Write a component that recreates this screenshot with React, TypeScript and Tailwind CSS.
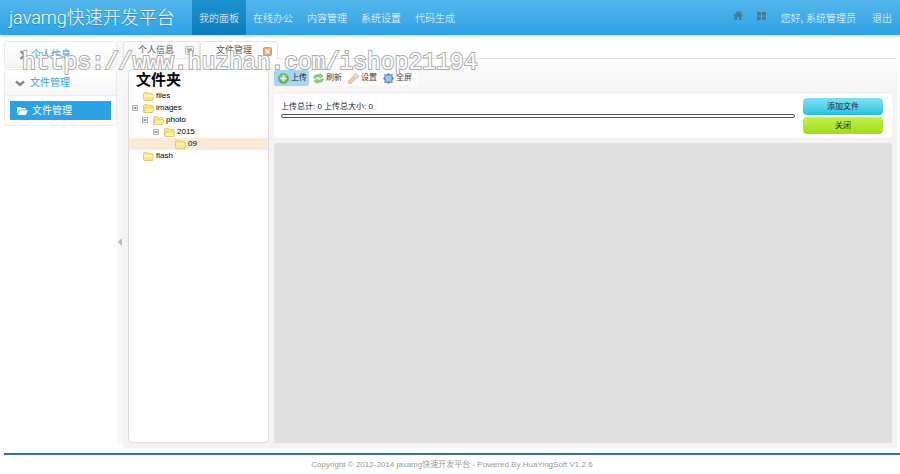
import React from 'react';

const navItems = ['我的面板', '在线办公', '内容管理', '系统设置', '代码生成'];

const treeItems = [
    { name: 'files', indent: 'pl-[14px]', open: false },
    { name: 'images', indent: 'pl-[3px]', open: true },
    { name: 'photo', indent: 'pl-[13px]', open: true },
    { name: '2015', indent: 'pl-[24px]', open: true },
    { name: '09', indent: 'pl-[46px]', open: false, selected: true },
    { name: 'flash', indent: 'pl-[14px]', open: false },
];

const FolderIcon = ({ open }: { open: boolean }) => (
    <svg className="w-[11px] h-[9px] shrink-0" viewBox="0 0 11 9">
        <path d="M.5 2Q.5.5 2 .5h2.5l1 1H9Q10 1.5 10 2.5V8q0 .5-.5.5h-8Q.5 8.500.5 7.500z" fill="#fbe388" stroke="#d9bd55" strokeWidth=".7" />
        {open
            ? <path d="M1 8.500 2.200 3.800h8.500L9.500 8.500z" fill="#fff0a0" stroke="#d9bd55" strokeWidth=".6" />
            : <path d="M1 3.200h8.500V5H1z" fill="#fff3b5" />}
    </svg>
);

const MinusBox = () => (
    <svg className="w-[6px] h-[6px] shrink-0" viewBox="0 0 6 6">
        <path d="M.5.5h5v5h-5z" fill="#fff" stroke="#999" strokeWidth=".8" />
        <path d="M1.500 3h3" stroke="#333" strokeWidth="1" />
    </svg>
);

const ChevronIcon = ({ down }: { down?: boolean }) => (
    <svg className="w-[10px] h-[10px]" viewBox="0 0 10 10" fill="none" stroke="#858585" strokeWidth="2.400">
        {down ? <path d="M1 3.500l4 3.500 4-3.500" /> : <path d="M3.500 1L7.500 5l-4 4" />}
    </svg>
);

const OpenFolderIcon = () => (
    <svg className="w-[11px] h-[8px]" viewBox="0 0 11 8" fill="#fff">
        <path d="M0 6.500V1q0-1 1-1h2.500l1 1H8q.8 0 .8.8v.7H2.800z" />
        <path d="M.6 8 3 3.200h8L8.800 8z" />
    </svg>
);

const CloseIcon = ({ active }: { active?: boolean }) => (
    <svg className="w-[9px] h-[9px]" viewBox="0 0 9 9">
        <rect x=".5" y=".5" width="8" height="8" rx="1" fill={active ? '#eda876' : '#f1f1f1'} stroke={active ? '#dc9560' : '#bbb'} />
        <path d="M2.500 2.500l4 4m0-4l-4 4" stroke={active ? '#fff' : '#888'} strokeWidth="1.400" />
    </svg>
);

const HomeIcon = () => (
    <svg className="w-[10px] h-[9px]" viewBox="0 0 10 9" fill="#4c7590">
        <path d="M5 0l5 4.500-.8.8L5 1.600.8 5.300 0 4.500z" />
        <path d="M5 1.600l3.500 3.200V9H6V6H4v3H1.500V4.800zM7.200.5h1.300V3L7.200 2z" />
    </svg>
);

const GridIcon = () => (
    <svg className="w-[9px] h-[8px]" viewBox="0 0 9 8" fill="#4c7590">
        <path d="M0 0h4v3.500H0zM5 0h4v3.500H5zM0 4.500h4V8H0zM5 4.500h4V8H5z" />
    </svg>
);

const AddIcon = () => (
    <svg className="w-[11px] h-[11px]" viewBox="0 0 11 11">
        <circle cx="5.500" cy="5.500" r="4.800" fill="#69b85a" stroke="#4d9945" strokeWidth=".8" />
        <circle cx="5.500" cy="4.500" r="3.500" fill="#8fd07c" opacity=".6" />
        <path d="M5.500 2.500v6M2.500 5.500h6" stroke="#fff" strokeWidth="1.600" />
    </svg>
);

const RefreshIcon = () => (
    <svg className="w-[11px] h-[11px]" viewBox="0 0 11 11" fill="#8fd083" stroke="#62ad5e" strokeWidth=".5">
        <path d="M.6 5.200Q1 1.800 4 1.800h2.800V.5L10 3 6.800 5.200V3.900H4Q2.700 3.900 2.500 5.200z" />
        <path d="M10.400 5.800Q10 9.200 7 9.200H4.200v1.300L1 8l3.200-2.200v1.300H7q1.300 0 1.500-1.300z" />
    </svg>
);

const ToolIcon = () => (
    <svg className="w-[11px] h-[11px]" viewBox="0 0 11 11">
        <path d="M2.200 8.800 5.600 5.400" stroke="#eba983" strokeWidth="4.200" strokeLinecap="round" />
        <path d="M2.200 8.800 5.600 5.400" stroke="#fbc8a6" strokeWidth="2.800" strokeLinecap="round" />
        <path d="M5.800 3.500 6.400 1.200 8.600.4 8.200 2.400l.8.700 1.900-.5-.8 2.300-2.400.8z" fill="#e3e3e3" stroke="#b5b5b5" strokeWidth=".6" />
    </svg>
);

const FullscreenIcon = () => (
    <svg className="w-[11px] h-[11px]" viewBox="0 0 11 11">
        <path d="M5.500 0 7.500 2h-4zM5.500 11l2-2h-4zM0 5.500l2-2v4zM11 5.500l-2-2v4z" fill="#5d7ea8" />
        <path d="M1 1.500h2M8 1.500h2M1 9.500h2M8 9.500h2" stroke="#9bb4d0" />
        <rect x="2" y="2" width="7" height="7" rx=".6" fill="#9dc3f6" stroke="#4d83cc" />
    </svg>
);

const tools = [
    { label: '上传', icon: <AddIcon />, active: true },
    { label: '刷新', icon: <RefreshIcon /> },
    { label: '设置', icon: <ToolIcon /> },
    { label: '全屏', icon: <FullscreenIcon /> },
];

const Header = () => (
    <header className="flex h-[35px] bg-linear-to-b from-[#52b6ec] to-[#2ea2e5] text-white text-[10px] font-light shadow-[0_1px_3px_#9ed6f5] whitespace-nowrap">
        <h1 className="w-48 pl-[9px] text-[18px] leading-[35px] font-['Roboto','Noto_Sans_CJK_SC',sans-serif] font-light [text-shadow:0_1px_1px_#2580b8] shrink-0">javamg快速开发平台</h1>
        <nav className="flex leading-[37px]">
            {navItems.map((item, index) => (
                <a key={item} href="#" className={index === 0 ? 'px-[7px] bg-linear-to-b from-[#1b91d0] to-[#0d7dbb]' : 'px-[7px]'}>{item}</a>
            ))}
        </nav>
        <div className="ml-auto flex pr-2 leading-[37px]">
            <a href="#" aria-label="首页" className="pt-[11px] mr-[14px]"><HomeIcon /></a>
            <a href="#" aria-label="菜单" className="pt-[12px] mr-[14px]"><GridIcon /></a>
            <span className="mr-4">您好, 系统管理员</span>
            <a href="#">退出</a>
        </div>
    </header>
);

const Sidebar = () => (
    <aside className="w-[113px] shrink-0 pt-[6px] text-[10px] text-[#34a4df]">
        <button type="button" className="flex items-center gap-[4px] w-full h-[27px] pl-3 border border-[#ebebeb] rounded-[3px] bg-linear-to-b from-white to-[#f6f6f6]">
            <ChevronIcon />个人信息
        </button>
        <div className="mt-px border border-[#ebebeb] rounded-[3px]">
            <button type="button" className="flex items-center gap-[5px] w-full h-[26px] pl-[10px] border-b border-[#ebebeb] bg-linear-to-b from-white to-[#f6f6f6]">
                <ChevronIcon down />文件管理
            </button>
            <a href="#" className="flex items-center gap-1 h-[19px] mx-[5px] my-[5px] pl-[7px] bg-[#2ba2e3] text-white">
                <OpenFolderIcon />文件管理
            </a>
        </div>
    </aside>
);

const FileTree = () => (
    <section className="w-[141px] shrink-0 border border-[#dedcda] rounded-[4px] bg-white">
        <h2 className="pl-[7px] text-[15px] leading-5 font-bold text-black">文件夹</h2>
        <ul>
            {treeItems.map((item) => (
                <li key={item.name} className={item.selected ? 'bg-[#fbe9d7]' : ''}>
                    <div className={`flex items-center h-3 ${item.indent}`}>
                        {item.open && <span className="mr-[5px]"><MinusBox /></span>}
                        <FolderIcon open={item.open} />
                        <span className="ml-[2px] text-[8px] text-black">{item.name}</span>
                    </div>
                </li>
            ))}
        </ul>
    </section>
);

const UploadArea = () => (
    <section className="flex-1 min-w-0 flex flex-col pt-px text-[8px] text-[#222]">
        <div className="flex self-start pr-1 bg-[#fbfbfb] rounded-[3px]">
            {tools.map((tool) => (
                <button key={tool.label} type="button" className={`flex items-center gap-[2px] h-4 pl-1 pr-[2px] rounded-[2px] ${tool.active ? 'bg-[#a5d5f7]' : 'text-[#444]'}`}>
                    {tool.icon}{tool.label}
                </button>
            ))}
        </div>
        <div className="flex mt-2 h-[44px] pl-[7px] pr-[9px] pt-1 gap-2 bg-white rounded-[4px]">
            <div className="flex-1">
                <p className="mt-[2px] leading-[13px]">上传总计: 0 上传总大小: 0</p>
                <div className="mt-px h-[4px] border border-[#555] rounded-full bg-white" />
            </div>
            <div className="flex flex-col gap-[2px] w-20">
                <button type="button" className="h-[17px] rounded-[4px] bg-linear-to-b from-[#80e0f0] to-[#18c3e2]">添加文件</button>
                <button type="button" className="h-[17px] rounded-[4px] bg-linear-to-b from-[#c0f04a] to-[#a2dc0e]">关闭</button>
            </div>
        </div>
        <div className="flex-1 mt-[5px] bg-[#e0e0e0] rounded-t-[3px]" />
    </section>
);

const App: React.FC = () => {
    return (
        <div className="relative flex flex-col min-h-screen bg-white font-['Liberation_Sans','Noto_Sans_CJK_SC',sans-serif]">
            <Header />
            <div className="flex flex-1 pl-1 pr-[3px]">
                <Sidebar />
                <button type="button" aria-label="收起" className="w-[6px] mt-[5px] mb-1 shrink-0 flex items-center bg-[#f7f7f7]">
                    <svg className="w-[5px] h-[8px]" viewBox="0 0 5 8"><path d="M5 0v8L1 4z" fill="#b5b5b5" /></svg>
                </button>
                <main className="flex-1 min-w-0 flex flex-col">
                    <div className="flex items-end h-[24px] border-b border-[#e7e7e7] text-[9px] text-[#555]">
                        <button type="button" className="flex items-center justify-between w-[77px] h-[17px] pt-px pl-[14px] pr-[5px] border border-b-0 border-[#e4e4e4] rounded-t-[3px] bg-[#fafafa]">
                            个人信息<CloseIcon />
                        </button>
                        <button type="button" className="flex items-center justify-between w-[78px] h-[18px] pt-px pl-[15px] pr-[5px] -mb-px border border-b-0 border-[#e4e4e4] rounded-t-[3px] bg-white">
                            文件管理<CloseIcon active />
                        </button>
                    </div>
                    <div className="flex flex-1 gap-[5px] mt-[5px] p-[5px] bg-linear-to-b from-[#fbfafa] to-[#f4f3f1] to-10%">
                        <FileTree />
                        <UploadArea />
                    </div>
                </main>
            </div>
            <footer className="ml-1 mt-[5px] h-[21px] border-t-2 border-[#347587] text-center text-[8px] leading-[19px] text-[#999]">
                Copyright © 2012-2014 javamg快速开发平台 - Powered By HuaYingSoft V1.2.6
            </footer>
            <div className="absolute left-[22px] top-[49px] pointer-events-none whitespace-nowrap font-['Liberation_Mono',monospace] text-[23px] leading-[29px] text-white [-webkit-text-stroke:2px_#aaaaaa] [paint-order:stroke_fill]">
                https://www.huzhan.com/ishop21194
            </div>
        </div>
    );
};

export default App;
